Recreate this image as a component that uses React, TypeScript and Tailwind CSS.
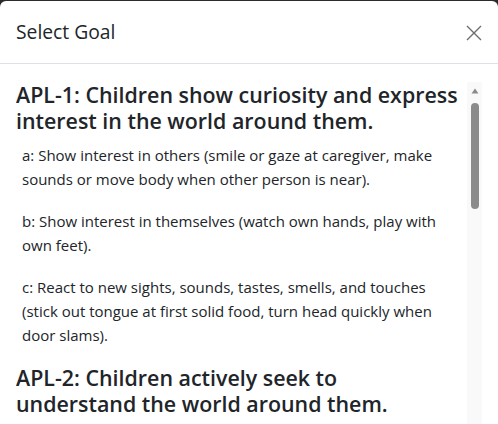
const goals = [
  {
    title: "APL-1: Children show curiosity and express interest in the world around them.",
    items: [
      "a: Show interest in others (smile or gaze at caregiver, make sounds or move body when other person is near).",
      "b: Show interest in themselves (watch own hands, play with own feet).",
      "c: React to new sights, sounds, tastes, smells, and touches (stick out tongue at first solid food, turn head quickly when door slams).",
    ],
  },
  {
    title: "APL-2: Children actively seek to understand the world around them.",
    items: [],
  },
];

const App = () => {
  return (
    <div
      className="h-[424px] overflow-hidden bg-[#2b2b2b] pt-px"
      style={{ fontFamily: '"Open Sans", "Noto Sans", sans-serif' }}
    >
      <div className="flex h-[423px] flex-col overflow-hidden rounded-t-[6px] bg-white">
        {/* Header */}
        <div className="flex h-[63px] shrink-0 items-center justify-between border-b border-[#dee2e6] px-4 pt-px">
          <h5 className="text-[19.3px] font-medium text-[#212529]">Select Goal</h5>
          <button className="flex h-4 w-4 items-center justify-center">
            <svg width="16" height="16" viewBox="0 0 16 16" fill="none">
              <path d="M1 1L15 15M15 1L1 15" stroke="#6d6d6d" strokeWidth="1.4" />
            </svg>
          </button>
        </div>

        {/* Body */}
        <div className="flex min-h-0 flex-1 px-4 pt-[18px]">
          <div className="min-w-0 flex-1 overflow-hidden">
            {goals.map((goal) => (
              <div key={goal.title}>
                <h4 className="mb-[9px] pr-[7px] text-[21.4px] leading-[26px] font-semibold text-[#212529]">
                  {goal.title}
                </h4>
                {goal.items.map((item) => (
                  <p
                    key={item}
                    className="mb-[18px] pl-[6px] pr-[4px] text-[15px] leading-[24px] text-[#212529]"
                  >
                    {item}
                  </p>
                ))}
              </div>
            ))}
          </div>

          {/* Scrollbar */}
          <div className="flex w-[15px] shrink-0 flex-col items-center bg-[#f9f9f9]">
            <svg className="mt-[6px]" width="8" height="6" viewBox="0 0 8 6">
              <path d="M4 0.5L7.5 5.5H0.5Z" fill="#8b8b8b" />
            </svg>
            <div className="mt-[9px] h-[106px] w-2 rounded-full bg-[#8b8b8b]" />
          </div>
        </div>
      </div>
    </div>
  );
};

export default App;
